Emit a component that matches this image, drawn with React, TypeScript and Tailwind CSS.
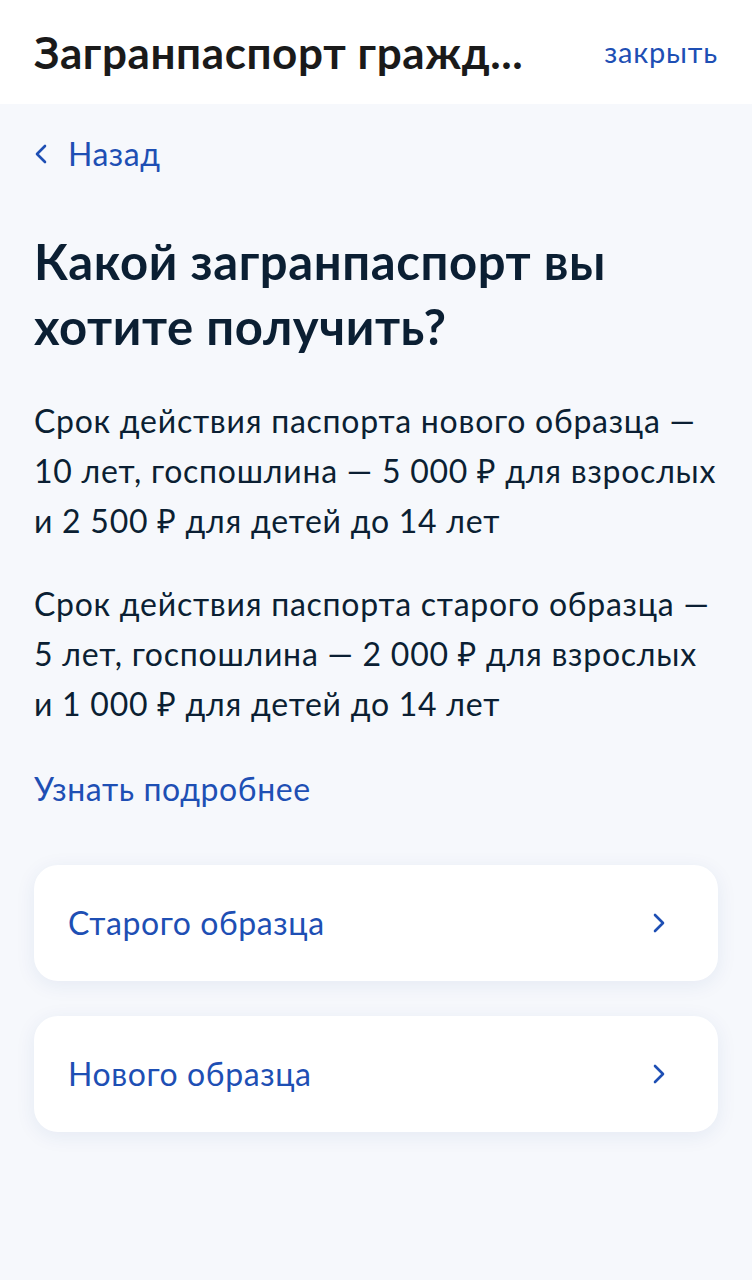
import React from "react";

const font = { fontFamily: "Lato, 'Noto Sans', sans-serif" };

function Chevron({ dir = "right" }: { dir?: "left" | "right" }) {
  return (
    <svg width="14" height="22" viewBox="0 0 14 22" fill="none">
      <path
        d={dir === "right" ? "M3 3l8 8-8 8" : "M11 3l-8 8 8 8"}
        stroke="currentColor"
        strokeWidth="2.6"
        strokeLinecap="round"
        strokeLinejoin="round"
      />
    </svg>
  );
}

function Option({ label }: { label: string }) {
  return (
    <button className="flex h-[116px] w-full items-center justify-between rounded-[24px] bg-white pl-[34px] pr-[52px] text-left shadow-[0_4px_20px_rgba(30,60,140,0.08)]">
      <span className="text-[32px] leading-[40px] tracking-[0.6px] text-[#1e4fb4]">{label}</span>
      <span className="text-[#1e4fb4]">
        <Chevron />
      </span>
    </button>
  );
}

export default function App() {
  return (
    <div className="min-h-[1280px] w-full bg-[#f6f8fc] text-[#0b1f33]" style={font}>
      {/* Top bar */}
      <header className="flex h-[104px] items-center justify-between bg-white px-[34px]">
        <h1 className="text-[44px] font-bold leading-[52px] tracking-[0.6px] text-[#1a1a1a]">Загранпаспорт гражд...</h1>
        <button className="text-[29px] leading-[36px] tracking-[0.8px] text-[#1e4fb4]">закрыть</button>
      </header>

      <main className="px-[34px]">
        <button className="mt-[30px] flex items-center gap-[20px] text-[#1e4fb4]">
          <Chevron dir="left" />
          <span className="text-[32px] leading-[40px] tracking-[0.5px]">Назад</span>
        </button>

        <h2 className="mt-[55px] text-[49px] font-bold leading-[65px] tracking-[0.6px]">
          Какой загранпаспорт вы хотите получить?
        </h2>

        <p className="mt-[37px] whitespace-nowrap text-[32px] leading-[50px] tracking-[0.75px]">
          Срок действия паспорта нового образца —<br />
          10 лет, госпошлина — 5 000 ₽ для взрослых<br />
          и 2 500 ₽ для детей до 14 лет
        </p>

        <p className="mt-[33px] whitespace-nowrap text-[32px] leading-[50px] tracking-[0.75px]">
          Срок действия паспорта старого образца —<br />
          5 лет, госпошлина — 2 000 ₽ для взрослых<br />
          и 1 000 ₽ для детей до 14 лет
        </p>

        <a className="mt-[35px] block text-[32px] leading-[50px] tracking-[0.6px] text-[#1e4fb4]">Узнать подробнее</a>

        <div className="mt-[51px] flex flex-col gap-[35px]">
          <Option label="Старого образца" />
          <Option label="Нового образца" />
        </div>
      </main>
    </div>
  );
}
